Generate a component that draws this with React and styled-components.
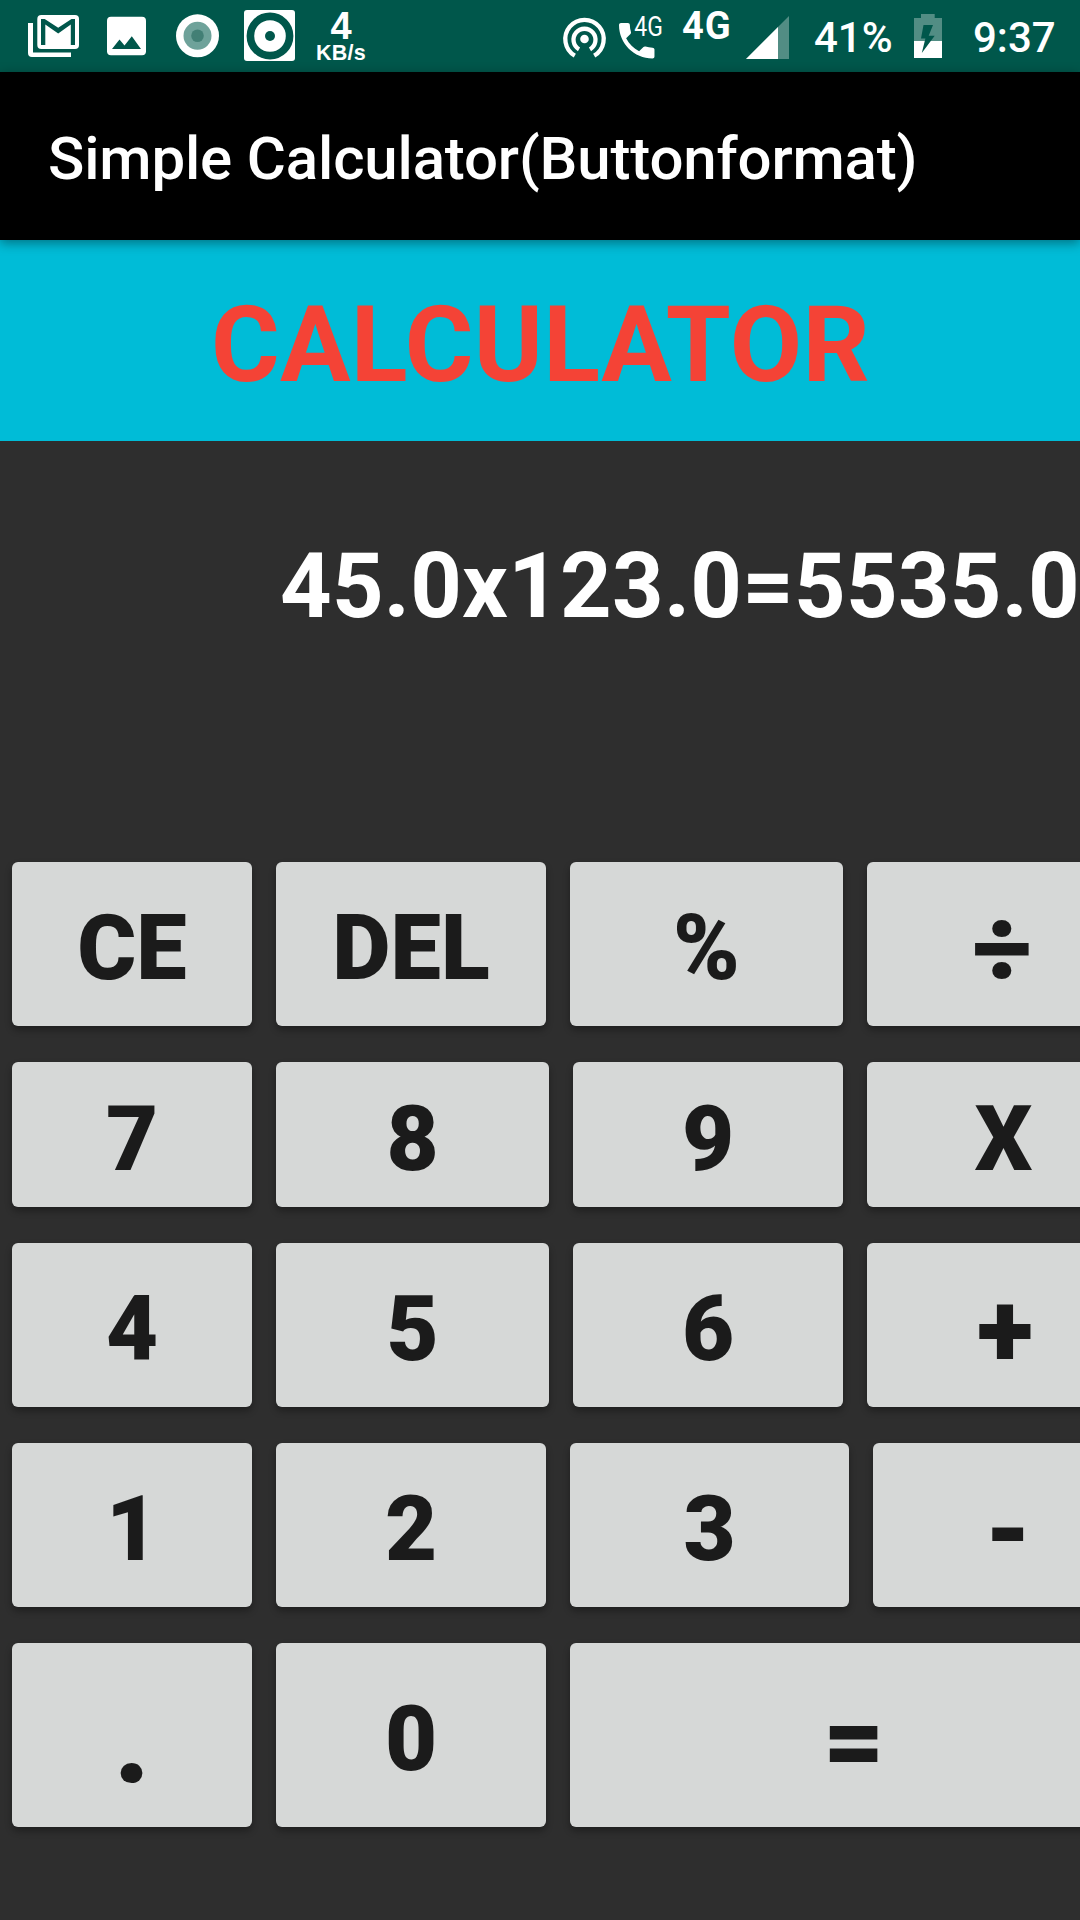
import React from "react";
import styled, { createGlobalStyle } from "styled-components";

const GlobalStyle = createGlobalStyle`
  html, body { margin: 0; padding: 0; background: #2e2e2e; overflow: hidden; }
  * { box-sizing: border-box; }
`;

const Screen = styled.div`
  width: 1080px;
  height: 1920px;
  overflow: hidden;
  display: flex;
  flex-direction: column;
  background: #2e2e2e;
  font-family: Roboto, "Liberation Sans", sans-serif;
`;

const StatusBar = styled.header`
  height: 72px;
  flex: none;
  display: flex;
  align-items: center;
  justify-content: space-between;
  padding: 0 25px 0 28px;
  background: #00574b;
  color: #fff;
`;

const StatusGroup = styled.div`
  display: flex;
  align-items: center;
  height: 72px;
`;

const Glyph = styled.svg`
  display: block;
  flex: none;
  overflow: visible;
  width: ${(p) => p.$w}px;
  height: 72px;
  margin-left: ${(p) => p.$gap || 0}px;
`;

const Speed = styled.div`
  display: flex;
  flex-direction: column;
  align-items: center;
  width: 54px;
  height: 72px;
  margin-left: 19px;
  padding-top: 9px;
`;

const SpeedValue = styled.span`
  font: 700 38px/34px "Liberation Sans", sans-serif;
`;

const SpeedUnit = styled.span`
  font: 700 21.5px/20px "Liberation Sans", sans-serif;
  letter-spacing: 0.3px;
`;

const Network = styled.span`
  width: 51px;
  margin-left: 19px;
  padding-bottom: 20px;
  font-size: 38px;
  font-weight: 700;
  letter-spacing: 1px;
  white-space: nowrap;
`;

const StatusText = styled.span`
  width: ${(p) => p.$w}px;
  margin-left: ${(p) => p.$gap}px;
  padding-top: 3px;
  font-size: 42px;
  font-weight: 500;
  white-space: nowrap;
`;

const AppBar = styled.div`
  height: 168px;
  flex: none;
  display: flex;
  align-items: center;
  padding: 5px 48px 0;
  position: relative;
  background: #000;
  box-shadow: 0 3px 11px rgba(0, 0, 0, 0.4);
`;

const AppTitle = styled.h1`
  margin: 0;
  color: #fff;
  font-size: 60px;
  font-weight: 500;
  letter-spacing: -0.16px;
  white-space: nowrap;
`;

const Banner = styled.div`
  height: 201px;
  flex: none;
  display: flex;
  align-items: center;
  justify-content: center;
  padding: 10px 0 0 1px;
  background: #00bcd7;
  color: #f44336;
  font-size: 105px;
  font-weight: 700;
  letter-spacing: 0.3px;
`;

const Display = styled.output`
  height: 421px;
  flex: none;
  display: flex;
  justify-content: flex-end;
  padding-top: 93px;
  color: #fff;
  font-size: 90px;
  font-weight: 700;
  line-height: 106px;
  letter-spacing: 0.27px;
`;

const Keypad = styled.main`
  display: flex;
  flex-direction: column;
  gap: 36px;
  padding-left: 12px;
`;

const KeyRow = styled.div`
  display: flex;
  gap: 24px;
  height: ${(p) => p.$h}px;
`;

const Key = styled.button`
  flex: none;
  display: flex;
  align-items: center;
  justify-content: center;
  width: ${(p) => p.$w}px;
  height: 100%;
  margin: 0;
  padding: ${(p) => p.$drop || 10}px 0 0;
  border: 0;
  border-radius: 6px;
  background: #d6d8d7;
  color: #1b1b1b;
  box-shadow: 0 4px 7px rgba(0, 0, 0, 0.32);
  font-family: inherit;
  font-size: ${(p) => p.$size || 90}px;
  font-weight: 900;
  line-height: 106px;
`;

const rows = [
  { h: 164, keys: [["CE", 240], ["DEL", 270], ["%", 273], ["÷", 270, 105, 12]] },
  { h: 145, keys: [["7", 240], ["8", 273], ["9", 270], ["X", 273]] },
  { h: 164, keys: [["4", 240], ["5", 273], ["6", 270], ["+", 276, 105, 13]] },
  { h: 164, keys: [["1", 240], ["2", 270], ["3", 279], ["-", 270, 105, 14]] },
  { h: 184, keys: [[".", 240, 120, 11], ["0", 270], ["=", 568, 105, 13]] },
];

const MailIcon = () => (
  <Glyph $w={51} viewBox="0 0 51 72">
    <path d="M0 23h5v29.500h38v4.500H4a4 4 0 0 1-4-4z" fill="#fff" />
    <rect x="9.300" y="15" width="41.700" height="34" rx="4" fill="#fff" />
    <path d="M13 45V19h3.700L30.200 27.800 43.500 19H47v26h-4.200V24.500L30.200 33.400 17.300 24.500V45z" fill="#00574b" />
  </Glyph>
);

const ImageIcon = () => (
  <Glyph $w={39} $gap={27.700} viewBox="0 0 39 72">
    <rect y="16.700" width="39" height="38.600" rx="4" fill="#fff" />
    <path d="M5 49l7.500-9.600 5 6.200 7.300-9.400L34 49z" fill="#00574b" />
  </Glyph>
);

const RecordIcon = () => (
  <Glyph $w={43} $gap={30.800} viewBox="0 0 43 72">
    <circle cx="21.500" cy="35.800" r="21.500" fill="#fff" />
    <circle cx="21.500" cy="35.800" r="14" fill="#6ea29a" />
    <circle cx="21.500" cy="35.800" r="6.300" fill="#427f75" />
  </Glyph>
);

const DiscIcon = () => (
  <Glyph $w={51} $gap={24.500} viewBox="0 0 51 72">
    <rect y="10" width="51" height="51" rx="3" fill="#fff" />
    <circle cx="26" cy="36" r="19.600" fill="none" stroke="#00574b" strokeWidth="7.600" />
    <circle cx="26" cy="36" r="5" fill="#00574b" />
  </Glyph>
);

const HotspotIcon = () => (
  <Glyph $w={43} viewBox="0 0 43 72" fill="none" stroke="#fff" strokeWidth="4.300">
    <circle cx="21.500" cy="39" r="4.300" fill="#fff" stroke="none" />
    <path d="M16 49.300a11 11 0 1 1 11 0" />
    <path d="M11.800 55.600a19.200 19.200 0 1 1 19.400 0" />
  </Glyph>
);

const CallIcon = () => (
  <Glyph $w={44} $gap={13} viewBox="0 0 44 72">
    <path
      transform="translate(-5.900 17.100) scale(1.970)"
      d="M6.620 10.790c1.440 2.830 3.760 5.140 6.590 6.590l2.200-2.200c.27-.27.67-.36 1.020-.24 1.120.37 2.330.57 3.570.57.55 0 1 .45 1 1V20c0 .55-.45 1-1 1-9.390 0-17-7.610-17-17 0-.55.45-1 1-1h3.500c.55 0 1 .45 1 1 0 1.250.2 2.450.57 3.570.11.35.03.74-.25 1.020l-2.200 2.200z"
      fill="#fff"
    />
    <text x="15.300" y="36.300" fontSize="27.500" fontWeight="400" textLength="28.500" lengthAdjust="spacingAndGlyphs" fill="#fff">
      4G
    </text>
  </Glyph>
);

const SignalIcon = () => (
  <Glyph $w={43} $gap={13} viewBox="0 0 43 72">
    <path d="M0 59L43 16v43z" fill="#fff" fillOpacity="0.32" />
    <path d="M0 59L32 27v32z" fill="#fff" />
  </Glyph>
);

const BatteryIcon = () => (
  <Glyph $w={28} $gap={21} viewBox="0 0 28 72">
    <path d="M0 18h7v-4h13.700v4H28v23H0z" fill="#fff" fillOpacity="0.32" />
    <path d="M0 41h28v17H0z" fill="#fff" />
    <path d="M9.500 25H19l-4.300 10.700h6L7.800 53l3.600-14.500H7z" fill="#00574b" />
  </Glyph>
);

export default function App() {
  return (
    <Screen>
      <GlobalStyle />
      <StatusBar>
        <StatusGroup>
          <MailIcon />
          <ImageIcon />
          <RecordIcon />
          <DiscIcon />
          <Speed>
            <SpeedValue>4</SpeedValue>
            <SpeedUnit>KB/s</SpeedUnit>
          </Speed>
        </StatusGroup>
        <StatusGroup>
          <HotspotIcon />
          <CallIcon />
          <Network>4G</Network>
          <SignalIcon />
          <StatusText $w={79} $gap={25}>41%</StatusText>
          <BatteryIcon />
          <StatusText $w={82} $gap={31}>9:37</StatusText>
        </StatusGroup>
      </StatusBar>
      <AppBar>
        <AppTitle>Simple Calculator(Buttonformat)</AppTitle>
      </AppBar>
      <Banner>CALCULATOR</Banner>
      <Display>45.0x123.0=5535.0</Display>
      <Keypad>
        {rows.map((row, i) => (
          <KeyRow key={i} $h={row.h}>
            {row.keys.map(([label, w, size, drop]) => (
              <Key key={label} $w={w} $size={size} $drop={drop}>
                {label}
              </Key>
            ))}
          </KeyRow>
        ))}
      </Keypad>
    </Screen>
  );
}
